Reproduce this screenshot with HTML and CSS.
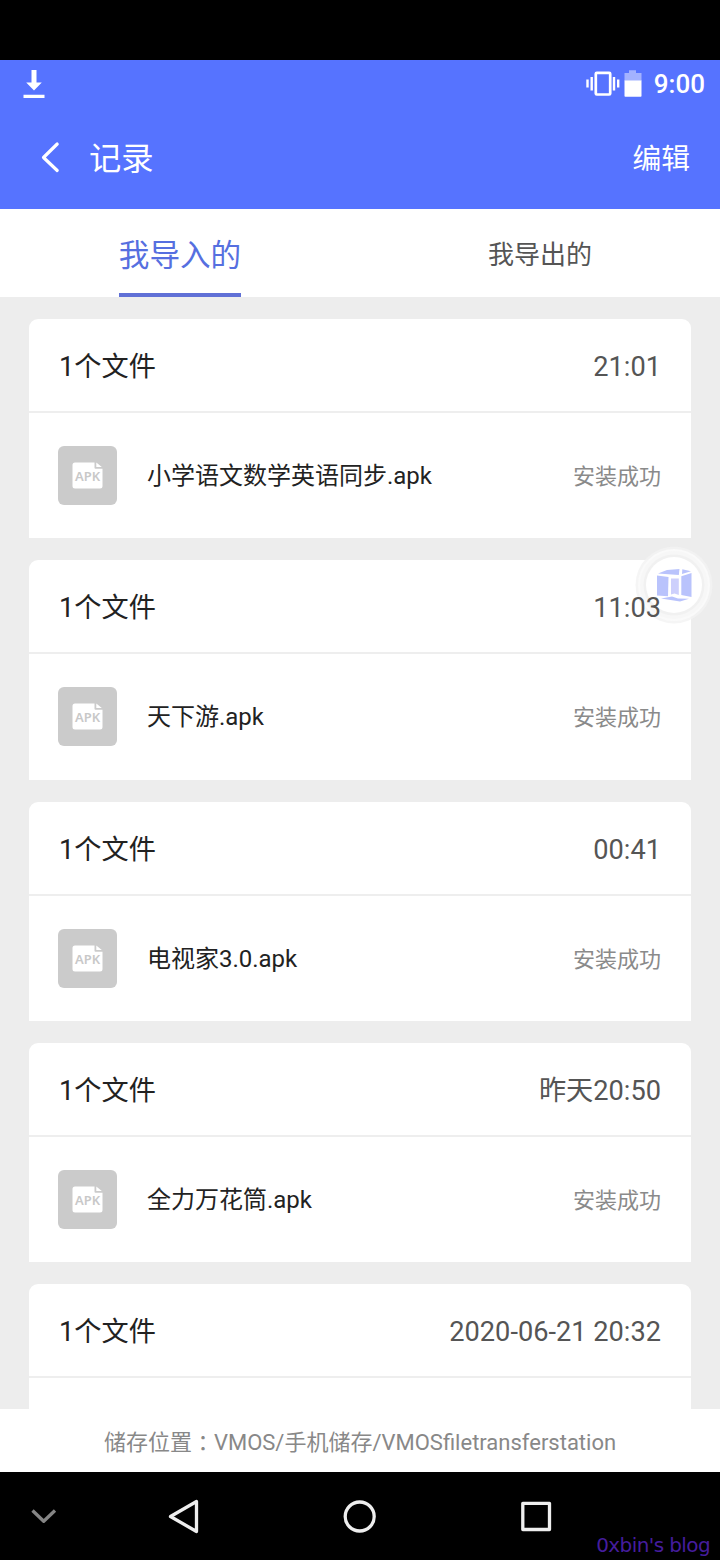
FILE: index.html
```html
<!DOCTYPE html>
<html lang="zh-CN">
<head>
<meta charset="utf-8">
<title>记录</title>
<link rel="stylesheet" href="styles.css">
</head>
<body>
<div class="phone">
  <div class="notch"></div>
  <header class="top">
    <div class="status">
      <svg class="download" width="22" height="28" viewBox="0 0 22 28" fill="#fff"><path d="M8.500 0h5v12.500h5.300L11 20.500 3.200 12.500h5.300zM.5 24.700h21V28H.5z"/></svg>
      <div class="status-right">
        <svg width="34" height="26" viewBox="0 0 34 26"><rect x="9.800" y="1.800" width="14.400" height="21.700" rx="1" fill="none" stroke="#fff" stroke-width="2.700"/><path d="M1.500 8.500v8M5.700 6v13.500M28 6v13.500M32.200 8.500v8" stroke="#fff" stroke-width="2.400"/></svg>
        <svg width="18" height="27" viewBox="0 0 18 27"><path d="M.5 3H5V.300h7V3h5.500v8H.5z" fill="#a3b2ff"/><path d="M.5 10.500h17V26q0 .8-.8.8H1.300q-.8 0-.8-.8z" fill="#fff"/></svg>
        <span class="clock">9:00</span>
      </div>
    </div>
    <div class="bar">
      <svg class="back" width="20" height="32" viewBox="0 0 20 32" fill="none" stroke="#fff" stroke-width="3.200" stroke-linecap="round" stroke-linejoin="round"><path d="M17.200 3L3.500 16.500 17.200 29.500"/></svg>
      <h1 class="title">记录</h1>
      <span class="edit">编辑</span>
    </div>
  </header>
  <nav class="tabs">
    <div class="tab"><span class="tab-on">我导入的</span></div>
    <div class="tab"><span class="tab-off">我导出的</span></div>
  </nav>
  <main class="list">
    <section class="card">
      <div class="card-head"><span>1个文件</span><span class="time">21:01</span></div>
      <div class="card-row">
        <svg class="icon" viewBox="0 0 59 59"><rect width="59" height="59" rx="6" fill="#cbcbcb"/><path d="M17 16.500h19.500v5.200q0 1 1 1H44.500V40q0 2.500-2.500 2.500H17q-2.500 0-2.500-2.500V19q0-2.500 2.500-2.500zM38.300 16.500l5.500 4.500h-5.500z" fill="#fff"/><text x="29.700" y="35" text-anchor="middle" class="apk-label">APK</text></svg>
        <span class="name">小学语文数学英语同步.apk</span><span class="state">安装成功</span>
      </div>
    </section>
    <section class="card">
      <div class="card-head"><span>1个文件</span><span class="time">11:03</span></div>
      <div class="card-row">
        <svg class="icon" viewBox="0 0 59 59"><rect width="59" height="59" rx="6" fill="#cbcbcb"/><path d="M17 16.500h19.500v5.200q0 1 1 1H44.500V40q0 2.500-2.500 2.500H17q-2.500 0-2.500-2.500V19q0-2.500 2.500-2.500zM38.300 16.500l5.500 4.500h-5.500z" fill="#fff"/><text x="29.700" y="35" text-anchor="middle" class="apk-label">APK</text></svg>
        <span class="name">天下游.apk</span><span class="state">安装成功</span>
      </div>
    </section>
    <section class="card">
      <div class="card-head"><span>1个文件</span><span class="time">00:41</span></div>
      <div class="card-row">
        <svg class="icon" viewBox="0 0 59 59"><rect width="59" height="59" rx="6" fill="#cbcbcb"/><path d="M17 16.500h19.500v5.200q0 1 1 1H44.500V40q0 2.500-2.500 2.500H17q-2.500 0-2.500-2.500V19q0-2.500 2.500-2.500zM38.300 16.500l5.500 4.500h-5.500z" fill="#fff"/><text x="29.700" y="35" text-anchor="middle" class="apk-label">APK</text></svg>
        <span class="name">电视家3.0.apk</span><span class="state">安装成功</span>
      </div>
    </section>
    <section class="card">
      <div class="card-head"><span>1个文件</span><span class="time">昨天20:50</span></div>
      <div class="card-row">
        <svg class="icon" viewBox="0 0 59 59"><rect width="59" height="59" rx="6" fill="#cbcbcb"/><path d="M17 16.500h19.500v5.200q0 1 1 1H44.500V40q0 2.500-2.500 2.500H17q-2.500 0-2.500-2.500V19q0-2.500 2.500-2.500zM38.300 16.500l5.500 4.500h-5.500z" fill="#fff"/><text x="29.700" y="35" text-anchor="middle" class="apk-label">APK</text></svg>
        <span class="name">全力万花筒.apk</span><span class="state">安装成功</span>
      </div>
    </section>
    <section class="card">
      <div class="card-head"><span>1个文件</span><span class="time">2020-06-21 20:32</span></div>
      <div class="card-row"></div>
    </section>
  </main>
  <footer class="path">储存位置<span class="colon" lang="zh-TW">：</span>VMOS/手机储存/VMOSfiletransferstation</footer>
  <div class="nav">
    <svg width="720" height="88" viewBox="0 0 720 88" fill="none" stroke="#eee" stroke-width="3.300" stroke-linejoin="round">
      <path d="M32.500 38.500L43.700 49.300 55 38.500" stroke="#858585" stroke-width="3.300"/>
      <path d="M170.500 44.500L196.500 29.500V59.500z"/>
      <circle cx="359.700" cy="44.500" r="14.500"/>
      <rect x="522.800" y="31.300" width="26.700" height="26.200"/>
    </svg>
    <span class="mark">0xbin's blog</span>
  </div>
  <svg class="float" width="84" height="84" viewBox="0 0 84 84">
    <circle cx="42" cy="42" r="38.500" fill="#f3f3f3" fill-opacity=".8"/>
    <circle cx="42" cy="42" r="35" fill="#f7f7f7" stroke="#fafafa" stroke-width="2"/>
    <circle cx="42" cy="42" r="30.500" fill="#f1f1f1"/>
    <circle cx="42" cy="42" r="28" fill="#fff"/>
    <g fill="#b9c3fc">
      <path d="M25 32.500L36.500 34 36 53.300 25 52.500z"/>
      <path d="M49.300 33.300L59.500 30V54L49.300 52z"/>
      <path d="M26 30.500L35 27 47.500 26 46.800 32z"/>
      <path d="M50.300 26.300L59 28.300 50 31z"/>
      <path d="M29 55.500L40 53.500 46 55.500 57 55.800 48 58.500z"/>
    </g>
    <path d="M39 35.500H46.800V52L42.500 50.500 39 51.500z" fill="#cdd0fc"/>
  </svg>
</div>
</body>
</html>
```
FILE: styles.css
```css
body {
  margin: 0;
  background: #000;
  font-family: Roboto, "Noto Sans CJK SC", sans-serif;
}
.phone {
  position: relative;
  display: flex;
  flex-direction: column;
  width: 720px;
  height: 1560px;
  overflow: hidden;
}
.notch { height: 60px; flex: none; }
.top {
  height: 148.500px;
  flex: none;
  background: #5673ff;
  color: #fff;
}
.status {
  display: flex;
  justify-content: space-between;
  align-items: center;
  height: 47px;
  padding: 0 15px 0 22.500px;
}
.status-right { display: flex; align-items: center; gap: 4px; }
.clock { font-size: 26px; font-weight: 500; margin-left: 8px; line-height: 48px; }
.bar {
  display: flex;
  align-items: center;
  height: 100px;
  padding: 0 30px 0 40px;
}
.title {
  margin: 0 0 3px 29px;
  font-size: 32.300px;
  font-weight: 400;
}
.edit { margin: 0 0 2px auto; font-size: 28.800px; }
.tabs {
  display: flex;
  flex: none;
  height: 88.500px;
  background: #fff;
}
.tab { flex: 1; display: flex; justify-content: center; }
.tab-on {
  box-sizing: border-box;
  height: 88px;
  line-height: 93px;
  font-size: 30.600px;
  color: #566fe0;
  border-bottom: 4px solid #6070d6;
}
.tab-off { line-height: 93px; font-size: 26px; color: #555; }
.list {
  flex: none;
  box-sizing: border-box;
  height: 1112px;
  padding: 22px 29px 0;
  overflow: hidden;
  background: #ededed;
}
.card {
  height: 219.300px;
  margin-bottom: 22px;
  background: #fff;
  border-radius: 9px 9px 0 0;
}
.card-head {
  box-sizing: border-box;
  display: flex;
  justify-content: space-between;
  align-items: baseline;
  height: 94px;
  padding: 3px 30px 0;
  border-bottom: 2px solid #eee;
  font-size: 27.200px;
  line-height: 91px;
  color: #222;
}
.time { position: relative; z-index: 2; color: #555; }
.card-row {
  display: flex;
  align-items: center;
  height: 125px;
  padding: 0 30px 0 29.400px;
}
.icon { width: 59px; height: 59px; }
.apk-label {
  font: 600 13px "Noto Sans", sans-serif;
  fill: #c8c8c8;
}
.name { margin-left: 29.500px; padding-bottom: 4px; font-size: 24px; color: #222; }
.state { margin-left: auto; padding-bottom: 3px; font-size: 22px; color: #8a8a8a; }
.path {
  flex: none;
  height: 63px;
  line-height: 62px;
  background: #fff;
  text-align: center;
  font-size: 22px;
  color: #888;
}
.colon { position: relative; top: 1px; font-family: "Noto Sans CJK TC", sans-serif; }
.nav { position: relative; flex: none; height: 88px; background: #000; }
.mark {
  position: absolute;
  right: 10px;
  bottom: 3px;
  font: 20px "DejaVu Sans", sans-serif;
  letter-spacing: -.6px;
  color: #451d9d;
}
.float { position: absolute; left: 632px; top: 543px; z-index: 1; }
```
